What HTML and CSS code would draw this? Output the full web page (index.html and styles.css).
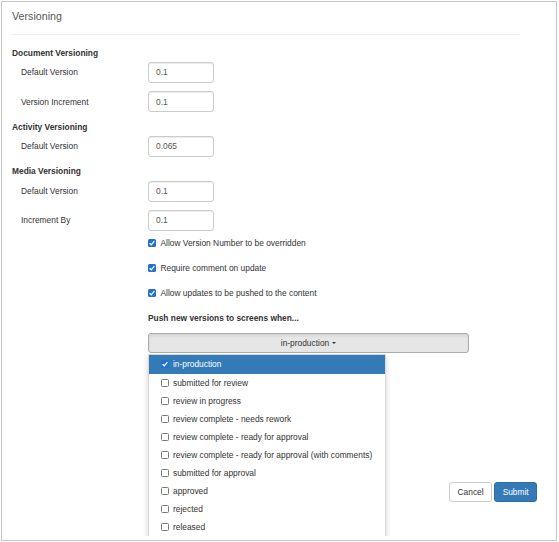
FILE: index.html
```html
<!DOCTYPE html>
<html>
<head>
<meta charset="utf-8">
<link rel="stylesheet" href="styles.css">
</head>
<body>
<div class="frame">
  <div class="clip">
    <div class="header">Versioning</div>
    <div class="body">
      <div class="heading first">Document Versioning</div>
      <div class="row"><span class="label">Default Version</span><span class="input">0.1</span></div>
      <div class="row gap"><span class="label">Version Increment</span><span class="input">0.1</span></div>
      <div class="heading">Activity Versioning</div>
      <div class="row"><span class="label">Default Version</span><span class="input">0.065</span></div>
      <div class="heading">Media Versioning</div>
      <div class="row"><span class="label">Default Version</span><span class="input">0.1</span></div>
      <div class="row gap"><span class="label">Increment By</span><span class="input">0.1</span></div>

      <div class="check-row"><span class="cb checked"><svg viewBox="0 0 8 8"><path d="M1.6 4.2 L3.3 5.8 L6.4 2.2" fill="none" stroke="#fff" stroke-width="1.3"/></svg></span>Allow Version Number to be overridden</div>
      <div class="check-row"><span class="cb checked"><svg viewBox="0 0 8 8"><path d="M1.6 4.2 L3.3 5.8 L6.4 2.2" fill="none" stroke="#fff" stroke-width="1.3"/></svg></span>Require comment on update</div>
      <div class="check-row"><span class="cb checked"><svg viewBox="0 0 8 8"><path d="M1.6 4.2 L3.3 5.8 L6.4 2.2" fill="none" stroke="#fff" stroke-width="1.3"/></svg></span>Allow updates to be pushed to the content</div>
      <div class="check-row bold">Push new versions to screens when...</div>

      <div class="dropdown">
        <div class="dd-btn">in-production <span class="caret"></span></div>
        <ul class="menu">
          <li class="active"><span class="cb checked"><svg viewBox="0 0 8 8"><path d="M1.6 4.2 L3.3 5.8 L6.4 2.2" fill="none" stroke="#fff" stroke-width="1.3"/></svg></span>in-production</li>
          <li><span class="cb"></span>submitted for review</li>
          <li><span class="cb"></span>review in progress</li>
          <li><span class="cb"></span>review complete - needs rework</li>
          <li><span class="cb"></span>review complete - ready for approval</li>
          <li><span class="cb"></span>review complete - ready for approval (with comments)</li>
          <li><span class="cb"></span>submitted for approval</li>
          <li><span class="cb"></span>approved</li>
          <li><span class="cb"></span>rejected</li>
          <li><span class="cb"></span>released</li>
          <li><span class="cb"></span>versions</li>
        </ul>
      </div>
    </div>
    <div class="footer">
      <span class="btn cancel">Cancel</span>
      <span class="btn submit">Submit</span>
    </div>
  </div>
</div>
</body>
</html>
```
FILE: styles.css
```css
html, body {
  margin: 0;
  padding: 0;
  background: #fff;
}
body {
  font-family: "Liberation Sans", Arial, sans-serif;
  font-size: 8.4px;
  color: #333;
}
.frame {
  margin: 1px 0 0 1px;
  width: 556px;
  height: 540px;
  box-sizing: border-box;
  border: 1px solid #c6c6c6;
  overflow: hidden;
}
.clip {
  height: 534px;
  overflow: hidden;
}
.header {
  margin: 0 36px 0 10px;
  height: 33px;
  box-sizing: border-box;
  line-height: 28px;
  font-size: 10.7px;
  color: #555;
  border-bottom: 1px solid #ececec;
}
.body {
  margin-left: 10px;
}
.heading {
  font-weight: bold;
  line-height: 12px;
  height: 12px;
  margin: 8.4px 0 3.2px 0;
}
.heading.first {
  margin-top: 11.8px;
}
.row {
  display: flex;
  align-items: center;
  height: 21px;
}
.row.gap {
  margin-top: 8.4px;
}
.label {
  width: 127px;
  padding-left: 9px;
}
.input {
  box-sizing: border-box;
  width: 66px;
  height: 21px;
  border: 1px solid #ccc;
  border-radius: 3px;
  padding: 0 7px;
  display: flex;
  align-items: center;
  color: #555;
  box-shadow: inset 0 1px 1px rgba(0,0,0,0.075);
}
.check-row {
  display: flex;
  align-items: center;
  height: 25px;
  margin-left: 136px;
}
.check-row .cb {
  margin-right: 4.5px;
}
.check-row.bold {
  font-weight: bold;
}
.cb {
  box-sizing: border-box;
  width: 8px;
  height: 8px;
  border: 1px solid #7a7a7a;
  border-radius: 1.5px;
  background: #fff;
  display: inline-flex;
  flex: none;
}
.cb.checked {
  border: none;
  background: #1f72d4;
}
.cb svg {
  width: 8px;
  height: 8px;
  display: block;
}
.dropdown {
  position: relative;
  margin: 2.2px 0 0 136px;
  width: 321px;
}
.dd-btn {
  box-sizing: border-box;
  height: 20px;
  border: 1px solid #adadad;
  border-radius: 3px;
  background: #e6e6e6;
  display: flex;
  align-items: center;
  justify-content: center;
  color: #333;
  box-shadow: inset 0 2px 3px rgba(0,0,0,0.08);
}
.caret {
  display: inline-block;
  width: 0;
  height: 0;
  margin-left: 3px;
  border-left: 2.5px solid transparent;
  border-right: 2.5px solid transparent;
  border-top: 2.5px solid #333;
}
.menu {
  position: absolute;
  left: 0;
  top: 21.3px;
  width: 238px;
  box-sizing: border-box;
  margin: 0;
  padding: 0;
  list-style: none;
  background: #fff;
  border: 1px solid rgba(0,0,0,0.15);
  box-shadow: 0 3px 6px rgba(0,0,0,0.175);
  z-index: 2;
}
.menu li {
  height: 18.1px;
  display: flex;
  align-items: center;
  padding-left: 12px;
  color: #333;
}
.menu li .cb {
  margin-right: 4px;
}
.menu li.active {
  background: #337ab7;
  color: #fff;
}
.footer {
  display: flex;
  justify-content: flex-end;
  gap: 2.4px;
  padding-right: 19px;
  margin-top: 128.7px;
}
.btn {
  box-sizing: border-box;
  height: 20.5px;
  padding: 0 7.3px;
  border-radius: 3px;
  display: inline-flex;
  align-items: center;
  border: 1px solid #ccc;
}
.btn.cancel {
  background: #fff;
  color: #333;
}
.btn.submit {
  background: #337ab7;
  border-color: #2e6da4;
  color: #fff;
}
```
